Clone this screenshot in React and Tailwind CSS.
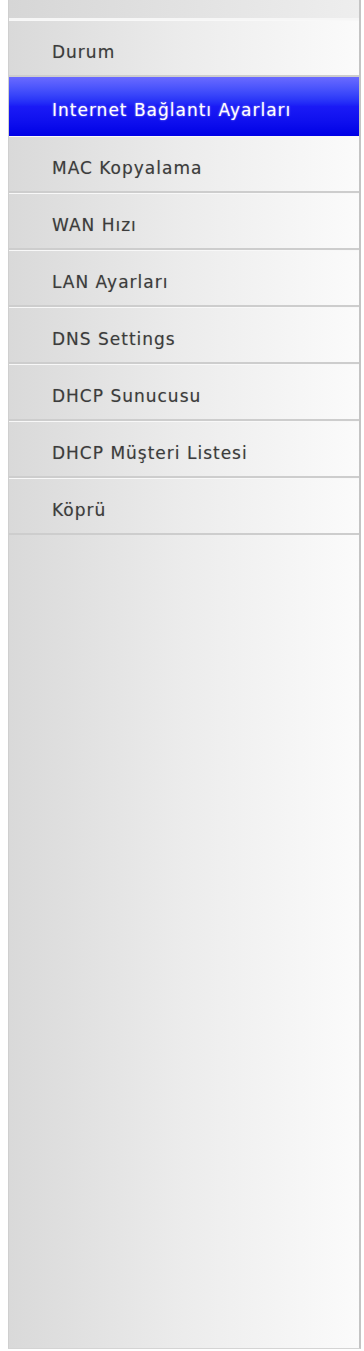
const items = [
  "Durum",
  "Internet Bağlantı Ayarları",
  "MAC Kopyalama",
  "WAN Hızı",
  "LAN Ayarları",
  "DNS Settings",
  "DHCP Sunucusu",
  "DHCP Müşteri Listesi",
  "Köprü",
];

export default function App() {
  const active = 1;
  return (
    <div className="w-[364px] h-[1351px] bg-white pl-[8px] pr-[3px] pb-[2px]">
      <div
        className="h-full flex flex-col border-l border-[#cfcfcf] border-r-2 border-r-[#c4c4c4] border-b border-b-[#d4d4d4] bg-gradient-to-r from-[#d9d9d9] via-[#ececec] to-[#fbfbfb]"
        style={{ fontFamily: "'DejaVu Sans', Verdana, sans-serif" }}
      >
        <div className="h-[20px] shrink-0 bg-gradient-to-r from-[#d6d6d6] to-[#eeeeee] border-b-2 border-[#f6f6f6]" />
        {items.map((label, i) =>
          i === active ? (
            <div
              key={label}
              className="h-[59px] shrink-0 flex items-center pl-[43px] pt-[8px] text-[17px] tracking-[1px] text-white bg-gradient-to-b from-[#6a6aff] via-[#1a1af6] to-[#0000e6] [text-shadow:0_0_2px_rgba(255,255,255,0.6)]"
            >
              {label}
            </div>
          ) : (
            <div
              key={label}
              className="h-[57px] shrink-0 flex items-center pl-[43px] pt-[10px] text-[17px] tracking-[1px] text-[#3c3c3c] border-b-2 border-[#cdcdcd] shadow-[inset_0_1px_0_#f8f8f8] [text-shadow:0_0_1px_rgba(0,0,0,0.25)]"
            >
              {label}
            </div>
          )
        )}
      </div>
    </div>
  );
}
